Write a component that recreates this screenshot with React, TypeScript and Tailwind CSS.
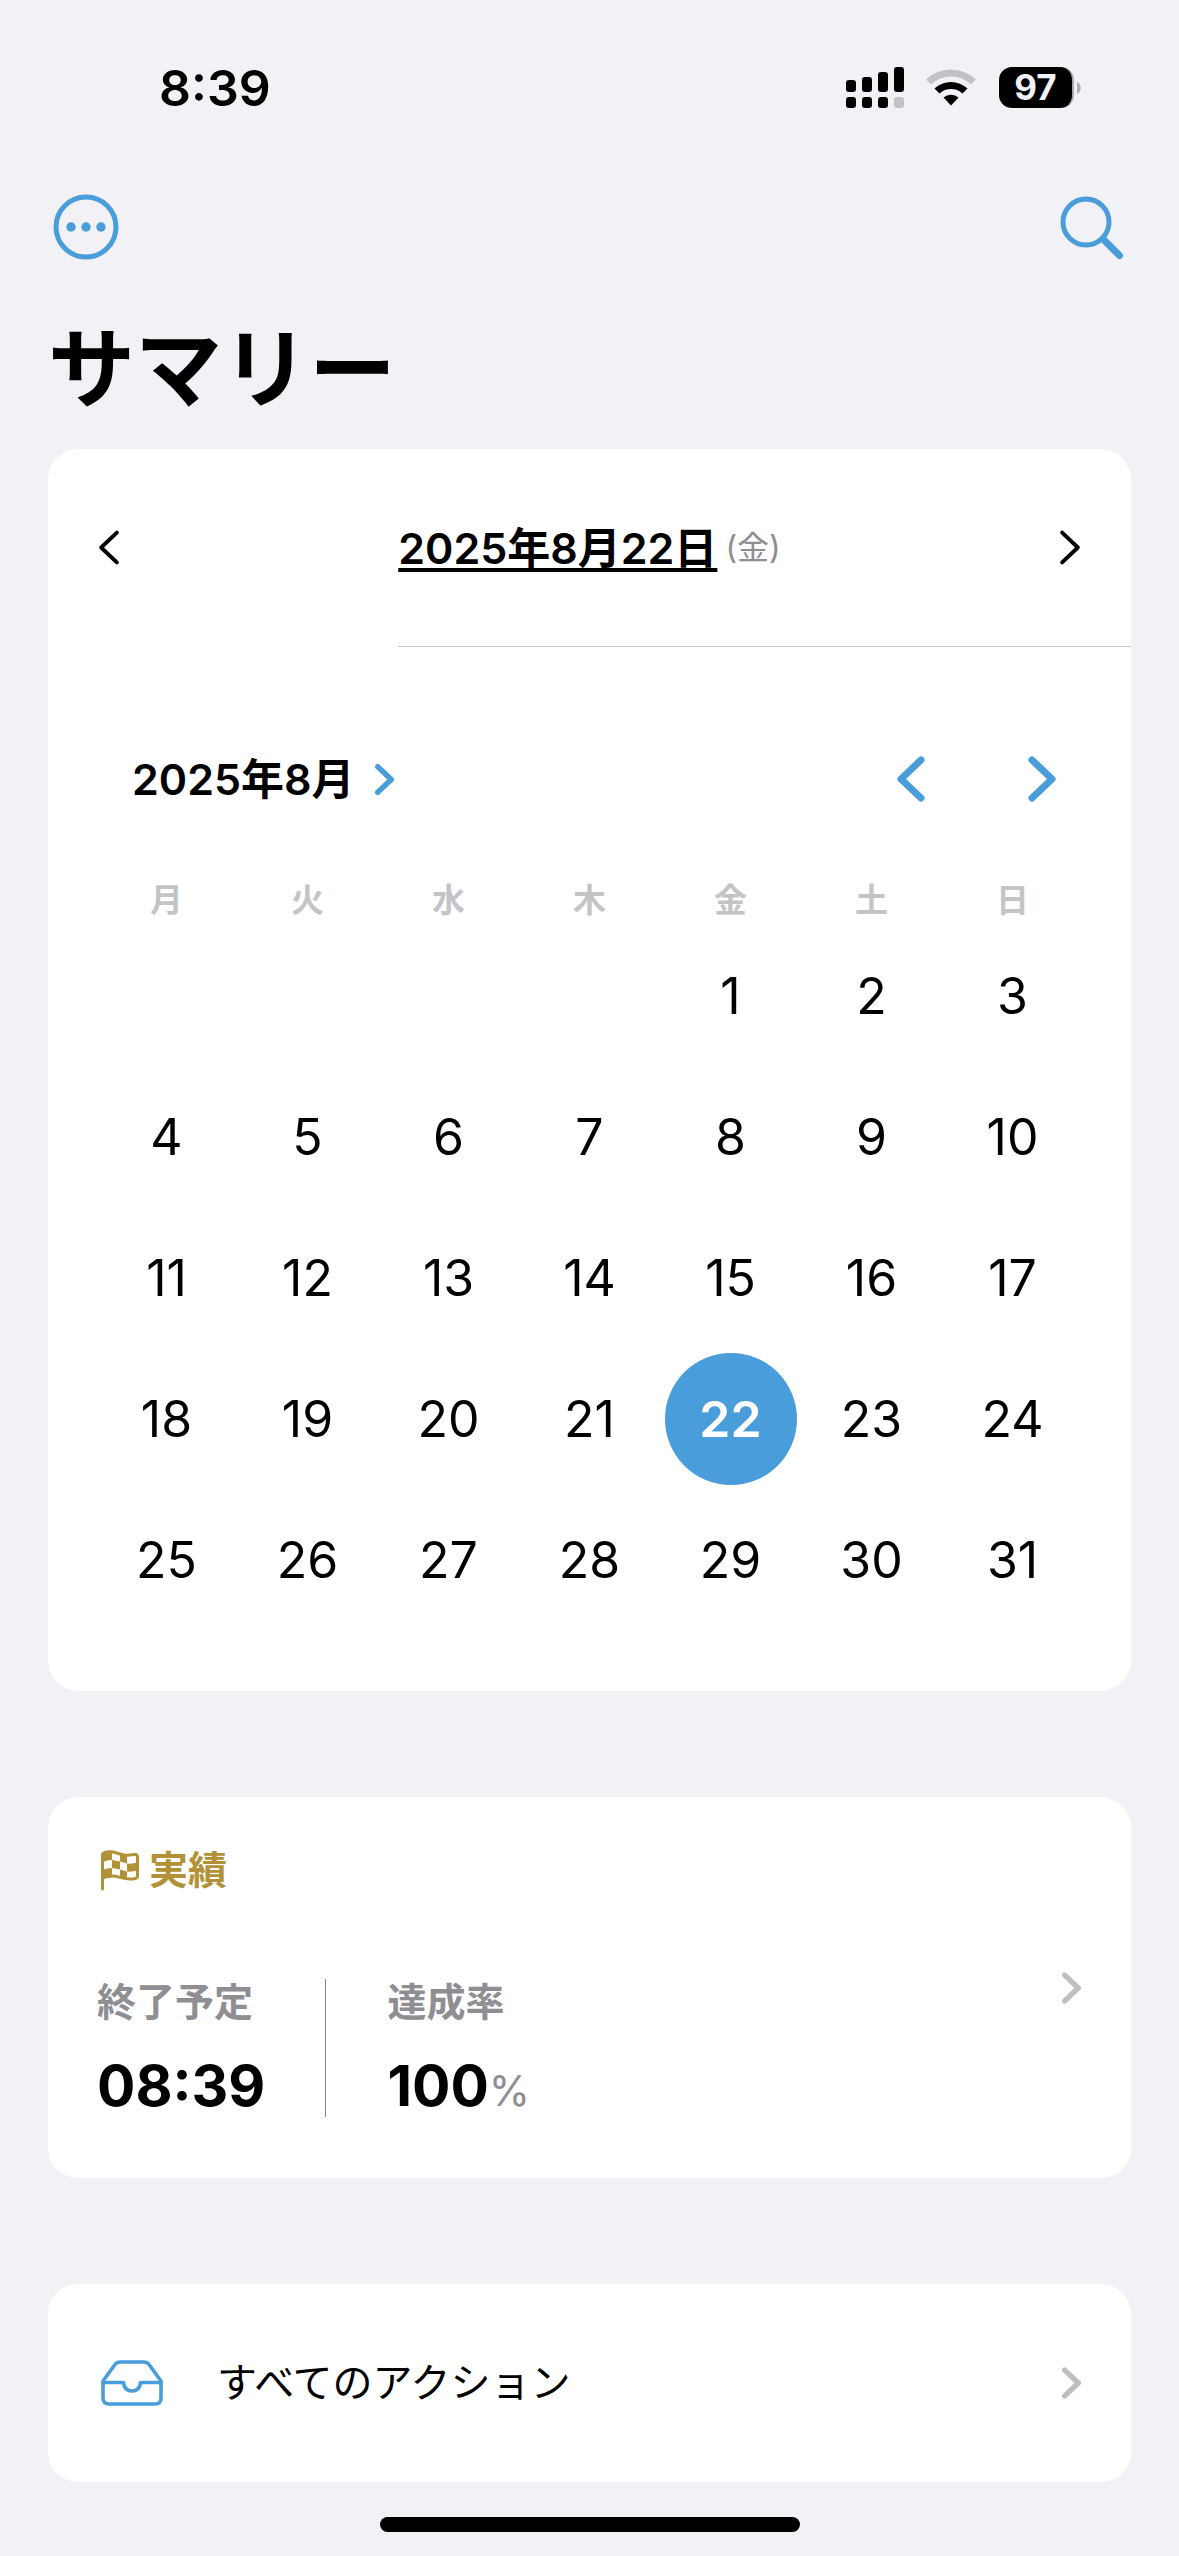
import React from 'react';

type ChevronProps = { dir?: 'left' | 'right'; className: string; stroke: number };

function Chevron({ dir = 'right', className, stroke }: ChevronProps) {
  return (
    <svg viewBox="0 0 28 46" className={className} fill="none" stroke="currentColor" strokeWidth={stroke} strokeLinecap="round" strokeLinejoin="round" aria-hidden="true">
      <path d={dir === 'right' ? 'M4 4L24 23L4 42' : 'M24 4L4 23L24 42'} />
    </svg>
  );
}

function StatusBar() {
  return (
    <div className="flex h-[175px] items-center justify-between pr-[98px] pl-[159px]">
      <span className="text-[50px] leading-none font-semibold">8:39</span>
      <div className="flex items-center">
        <svg viewBox="0 0 58 41" className="h-[41px] w-[58px]" aria-hidden="true">
          <rect x="0" y="13" width="10" height="12" rx="3" />
          <rect x="16" y="10" width="10" height="15" rx="3" />
          <rect x="32" y="5" width="10" height="20" rx="3" />
          <rect x="48" y="0" width="10" height="25" rx="3" />
          <rect x="0" y="30" width="10" height="11" rx="3" />
          <rect x="16" y="30" width="10" height="11" rx="3" />
          <rect x="32" y="30" width="10" height="11" rx="3" />
          <rect x="48" y="30" width="10" height="11" rx="3" fill="#c2c1c6" />
        </svg>
        <svg viewBox="0 0 50 37" className="ml-[22px] h-[37px] w-[50px]" aria-hidden="true">
          <path d="M0 10.5A36 36 0 0 1 50 10.5L45 15.5A29 29 0 0 0 5 15.5Z" fill="#c2c1c6" />
          <path d="M8.500 19.500A24 24 0 0 1 41.500 19.500L36.500 24.500A17 17 0 0 0 13.500 24.500Z" />
          <path d="M17.500 28.500A11.500 11.500 0 0 1 32.500 28.500L25 36.500Z" />
        </svg>
        <div className="ml-[23px] flex h-[41px] w-[75px] items-center justify-center rounded-[13px] border-r-2 border-[#a9a9ad] bg-black text-[35px] leading-none font-bold text-[#f1f1f6]">97</div>
        <svg viewBox="0 0 4 12" className="ml-[3px] h-3 w-1" aria-hidden="true">
          <path d="M0 0C5 2 5 10 0 12Z" fill="#b0b0b4" />
        </svg>
      </div>
    </div>
  );
}

function FlagIcon() {
  return (
    <svg viewBox="0 0 38 41" className="h-[41px] w-[38px]" fill="none" aria-hidden="true">
      <path d="M1.500 39V4C8 -1 17 4 23 5C28 6 32 4 35 4.500Q36.500 5 36.500 7V26Q36.500 28 34 28.500C25 31 18 26 12 26Q6 26 1.500 28" stroke="currentColor" strokeWidth="3" strokeLinecap="round" strokeLinejoin="round" />
      <g fill="currentColor">
        <path d="M2 3Q7 1 11 2V10Q6 10 2 12Z" />
        <path d="M19 4L26 5.500V13.500L19 11.500Z" />
        <path d="M11 10L19 11.500V19.500L11 18Z" />
        <path d="M26 13.500Q32 14 36 12.500V20.500Q32 22 26 21.500Z" />
        <path d="M2 20Q6 18 11 18V26Q6 26 2 28Z" />
        <path d="M19 19.500L26 21.500V29L19 27.500Z" />
      </g>
    </svg>
  );
}

function TrayIcon() {
  return (
    <svg viewBox="0 0 62 46" className="h-[46px] w-[62px]" fill="none" stroke="#489dda" strokeWidth="3.600" strokeLinecap="round" strokeLinejoin="round" aria-hidden="true">
      <path d="M2 21L14 4.500Q16 2 19 2H43Q46 2 48 4.500L60 21V38Q60 44 54 44H8Q2 44 2 38Z" />
      <path d="M2 22.500H22.500C23 28 26 31 31 31S39 28 39.500 22.500H60" />
    </svg>
  );
}

const weekdays = ['月', '火', '水', '木', '金', '土', '日'];
const cells: (number | null)[] = [null, null, null, null, ...Array.from({ length: 31 }, (_, i) => i + 1)];
const weeks = Array.from({ length: 5 }, (_, w) => cells.slice(w * 7, w * 7 + 7));

function Calendar() {
  return (
    <div className="px-12 pt-[101px] pb-[61px]">
      <div className="flex h-[62px] items-center justify-between pr-[27px] pl-[36px]">
        <button type="button" className="flex items-center gap-[20px] text-[43px] leading-none font-semibold">
          2025年8月
          <Chevron className="h-[31px] w-[19px] text-[#489dda]" stroke={8} />
        </button>
        <div className="flex items-center gap-[103px] text-[#489dda]">
          <button type="button" aria-label="前の月"><Chevron dir="left" className="h-[46px] w-7" stroke={7} /></button>
          <button type="button" aria-label="次の月"><Chevron className="h-[46px] w-7" stroke={7} /></button>
        </div>
      </div>
      <table className="mt-[65px] w-full table-fixed border-collapse text-center">
        <thead>
          <tr>
            {weekdays.map((d) => (
              <th key={d} scope="col" className="h-[50px] p-0 align-middle text-[33px] leading-none font-bold text-[#c4c4c6]">{d}</th>
            ))}
          </tr>
        </thead>
        <tbody>
          {weeks.map((week, w) => (
            <tr key={w}>
              {week.map((day, i) => (
                <td key={i} className="h-[141px] p-0 align-middle">
                  {day !== null && (
                    <button
                      type="button"
                      aria-pressed={day === 22}
                      className={
                        day === 22
                          ? 'size-[132px] rounded-full bg-[#489dda] align-middle text-[50px] leading-none font-semibold text-white'
                          : 'size-[132px] rounded-full align-middle text-[50px] leading-none'
                      }
                    >
                      {day}
                    </button>
                  )}
                </td>
              ))}
            </tr>
          ))}
        </tbody>
      </table>
    </div>
  );
}

export default function App() {
  return (
    <div lang="ja" className="flex min-h-screen flex-col bg-[#f1f1f6] font-['Inter','Noto_Sans_CJK_JP',sans-serif] text-black">
      <StatusBar />
      <header className="px-12">
        <div className="flex h-[103px] items-center justify-between pr-[7px] pl-[5px]">
          <button type="button" aria-label="メニュー">
            <svg viewBox="0 0 66 66" className="size-[66px]" fill="none" aria-hidden="true">
              <circle cx="33" cy="33" r="30" stroke="#489dda" strokeWidth="5" />
              <g fill="#489dda">
                <circle cx="18" cy="33" r="4.700" />
                <circle cx="33" cy="33" r="4.700" />
                <circle cx="48" cy="33" r="4.700" />
              </g>
            </svg>
          </button>
          <button type="button" aria-label="検索">
            <svg viewBox="0 0 66 66" className="size-[66px]" fill="none" stroke="#489dda" aria-hidden="true">
              <circle cx="28" cy="28" r="23" strokeWidth="5" />
              <path d="M45 45L61.500 61.500" strokeWidth="7" strokeLinecap="round" />
            </svg>
          </button>
        </div>
        <h1 className="pt-3 text-[87px] leading-[159px] font-bold">サマリー</h1>
      </header>

      <main className="flex flex-col px-12">
        <section className="rounded-[30px] bg-white">
          <div className="flex h-[197px] items-center justify-between px-[50px]">
            <button type="button" aria-label="前の日"><Chevron dir="left" className="h-[37px] w-[22px]" stroke={5} /></button>
            <div className="flex items-center gap-2">
              <button type="button" className="text-[43px] leading-[48px] font-semibold underline decoration-4 underline-offset-4 [text-decoration-skip-ink:none]">2025年8月22日</button>
              <span className="text-[32px] leading-none text-[#8e8e93]">(金)</span>
            </div>
            <button type="button" aria-label="次の日"><Chevron className="h-[37px] w-[22px]" stroke={5} /></button>
          </div>
          <hr className="ml-[350px] border-t border-[#c6c6c8]" />
          <Calendar />
        </section>

        <section className="mt-[106px] flex items-center justify-between rounded-[30px] bg-white pr-[50px] pl-[49px]">
          <div className="pt-[47px] pb-[61px]">
            <h2 className="flex items-center gap-[10px] pl-1 text-[39px] leading-[52px] font-bold text-[#b39136]">
              <FlagIcon />
              実績
            </h2>
            <div className="mt-[83px] flex h-[138px]">
              <div>
                <p className="text-[39px] leading-[46px] font-bold text-[#8e8e93]">終了予定</p>
                <p className="mt-[29px] text-[57px] leading-[64px] font-bold">08:39</p>
              </div>
              <div className="mr-[61px] ml-[60px] w-px bg-[#848484]" />
              <div>
                <p className="text-[39px] leading-[46px] font-bold text-[#8e8e93]">達成率</p>
                <p className="mt-[29px] text-[57px] leading-[64px] font-bold">
                  100<span className="text-[42px] font-normal text-[#8e8e93]">%</span>
                </p>
              </div>
            </div>
          </div>
          <button type="button" aria-label="実績の詳細"><Chevron className="h-8 w-[19px] text-[#bfbfbf]" stroke={8} /></button>
        </section>

        <a href="#actions" className="mt-[106px] flex h-[198px] items-center rounded-[30px] bg-white pr-[50px] pl-[53px]">
          <TrayIcon />
          <span className="ml-[54px] flex-1 text-[40px] leading-none">すべてのアクション</span>
          <Chevron className="h-8 w-[19px] text-[#bfbfbf]" stroke={8} />
        </a>
      </main>
      <div className="mx-auto mt-[35px] mb-6 h-[15px] w-[420px] rounded-full bg-black" />
    </div>
  );
}
